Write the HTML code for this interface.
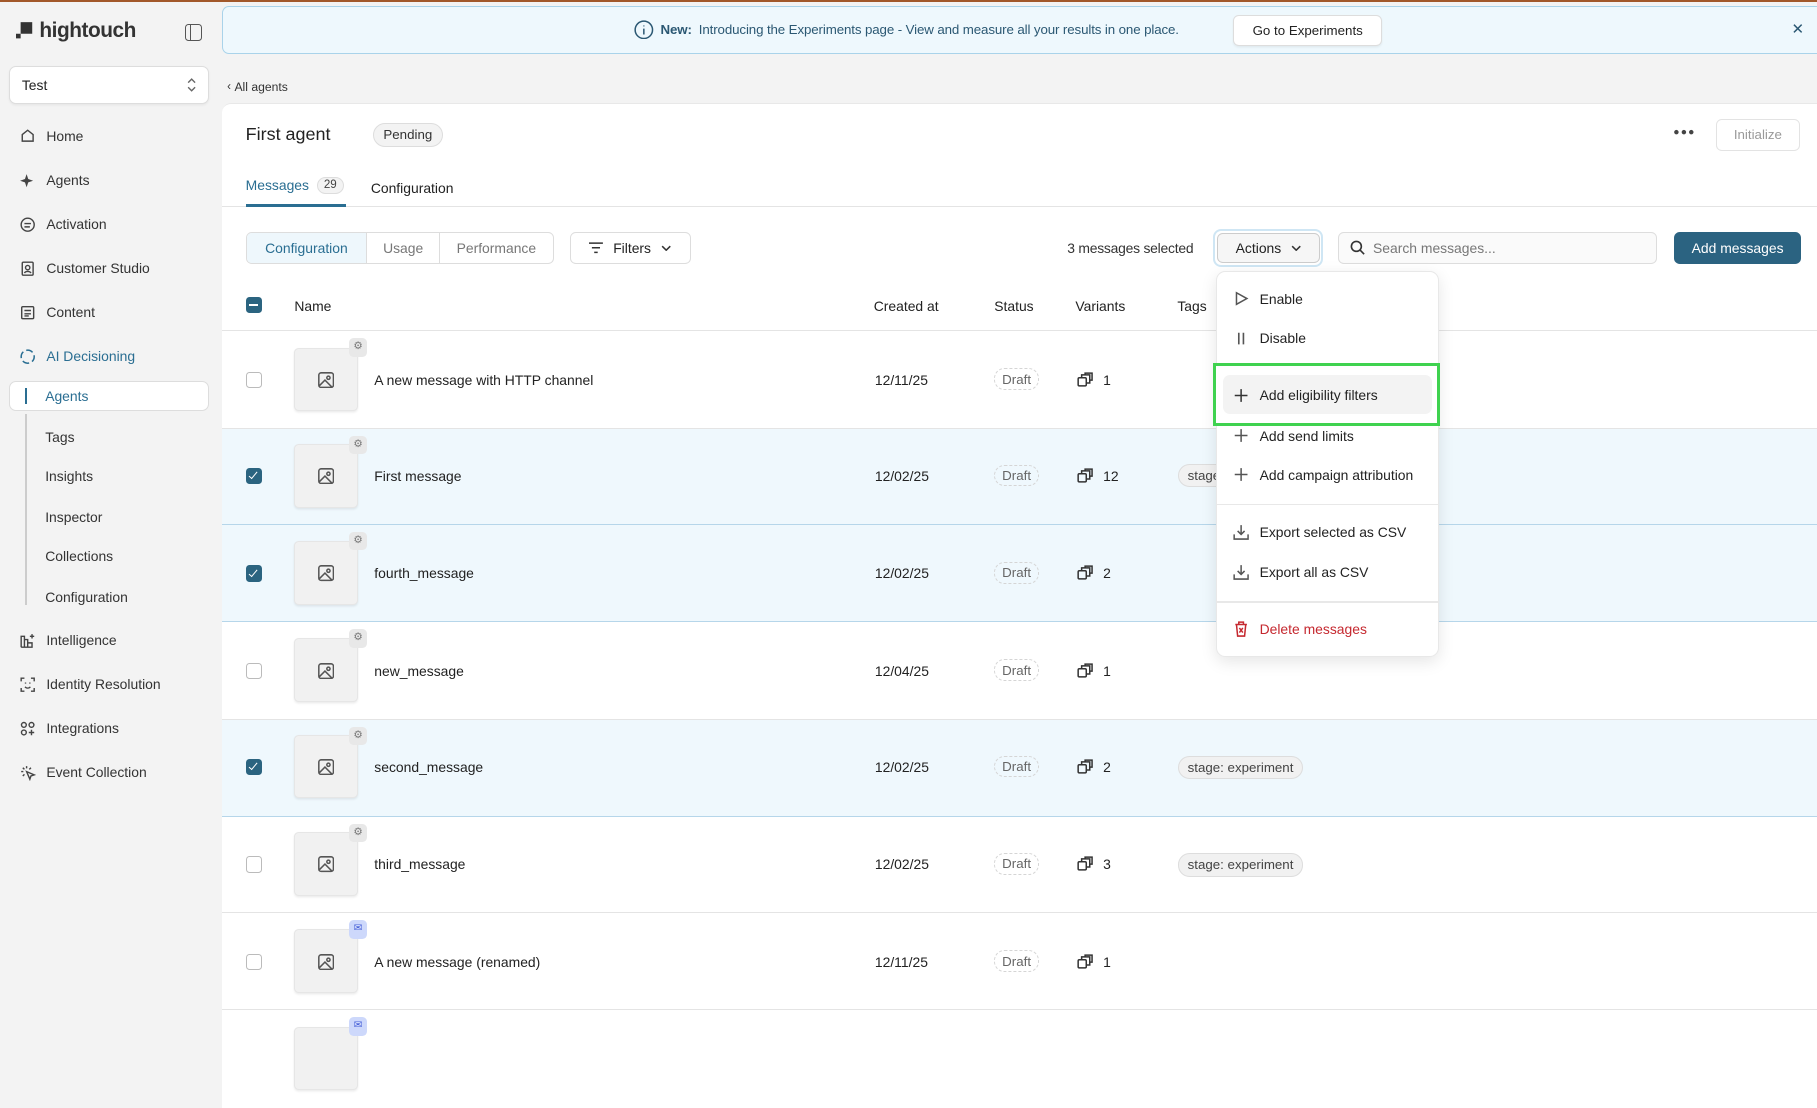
<!DOCTYPE html>
<html><head><meta charset="utf-8">
<style>
html{zoom:1.1588}
*{box-sizing:border-box;margin:0;padding:0}
body{width:1568px;height:905px;overflow:hidden;background:#f3f3f3;font-family:"Liberation Sans",sans-serif;color:#222;font-size:12px;position:relative}
.a{position:absolute}
.c{display:flex;align-items:center}
.nav{position:absolute;left:16px;display:flex;align-items:center;gap:9px;color:#333;font-size:12px}
.nav svg{width:15px;height:15px}
.sub{position:absolute;left:39px;color:#333;font-size:12px}
.row{position:absolute;left:192px;width:1376px;height:84px;border-bottom:1px solid #e4e4e4;background:#fff}
.row.sel{background:#eff8fd;border-bottom:1px solid #b6d6ea}
.cb{position:absolute;left:20px;width:14px;height:14px;border:1px solid #bbb;border-radius:3px;background:#fff}
.cb.on{background:#2b6480;border-color:#2b6480}
.cb.on::after{content:"";position:absolute;left:4px;top:1px;width:3px;height:7px;border:solid #fff;border-width:0 1.6px 1.6px 0;transform:rotate(40deg)}
.th{position:absolute;left:62px;width:55px;height:55px;background:#f1f1f1;border:1px solid #e6e6e6;border-radius:4px;box-shadow:0 1px 2px rgba(0,0,0,.08)}
.bd{position:absolute;left:109px;width:16px;height:16px;background:#e8e8e8;border-radius:4px;font-size:9px;color:#777;text-align:center;line-height:16px}
.bd.m{background:#cdd8fb;color:#4a63d8}
.pill{position:absolute;border:1px dashed #d5d5d5;border-radius:9px;padding:2px 6px;color:#666;font-size:11.5px}
.tag{position:absolute;left:825px;background:#f1f1f1;border:1px solid #ddd;border-radius:10px;padding:3px 7px;font-size:11.5px;color:#444}
.mi{position:absolute;left:1064px;display:flex;align-items:center;gap:9px;font-size:12px;color:#222}
.ic{position:absolute;left:274px}
.vi{position:absolute}
</style></head><body>
<div class="a" style="left:0;top:0;width:1568px;height:2px;background:#a2582a"></div>
<div class="a c" style="left:14px;top:16px;gap:4px"><svg width="16" height="16"><rect x="4" y="1" width="10" height="10" fill="#333"/><rect x="0" y="11" width="4" height="4" fill="#333"/></svg><span style="font-size:18px;font-weight:bold;color:#333;letter-spacing:-.4px">hightouch</span></div>
<div class="a" style="left:160px;top:21px;width:14px;height:14px;border:1.5px solid #555;border-radius:3px"><div style="position:absolute;left:3px;top:0;bottom:0;border-left:1.5px solid #555"></div></div>
<div class="a c" style="left:8px;top:57px;width:172px;height:33px;background:#fff;border:1px solid #ddd;border-radius:6px;padding:0 10px;justify-content:space-between;box-shadow:0 1px 2px rgba(0,0,0,.05)"><span>Test</span><svg width="8" height="12" fill="none" stroke="#666" stroke-width="1.2"><path d="M1 4l3-3 3 3M1 8l3 3 3-3"/></svg></div>
<div class="nav" style="top:110px"><svg viewBox="0 0 16 16" fill="none" stroke="#444" stroke-width="1.3"><path d="M3 7l5-4 5 4v6H3z"/></svg>Home</div>
<div class="nav" style="top:148px"><svg viewBox="0 0 16 16" fill="#444"><path d="M7 2l1.5 4.5L13 8l-4.5 1.5L7 14 5.5 9.5 1 8l4.5-1.5z"/></svg>Agents</div>
<div class="nav" style="top:186px"><svg viewBox="0 0 16 16" fill="none" stroke="#444" stroke-width="1.3"><circle cx="8" cy="8" r="6"/><path d="M5 7h6M5 10h5"/></svg>Activation</div>
<div class="nav" style="top:224px"><svg viewBox="0 0 16 16" fill="none" stroke="#444" stroke-width="1.3"><rect x="3" y="2" width="10" height="12" rx="1"/><circle cx="8" cy="7" r="2"/><path d="M5 12c1-2 5-2 6 0"/></svg>Customer Studio</div>
<div class="nav" style="top:262px"><svg viewBox="0 0 16 16" fill="none" stroke="#444" stroke-width="1.3"><rect x="2.5" y="2.5" width="11" height="11" rx="1"/><path d="M5 6h6M5 9h6M5 11h4"/></svg>Content</div>
<div class="nav" style="top:300px;color:#2a6e92"><svg viewBox="0 0 16 16" fill="none" stroke="#2a6e92" stroke-width="1.4"><path d="M8 2a6 6 0 0 1 6 6M14 8a6 6 0 0 1-6 6M8 14a6 6 0 0 1-6-6M2 8a6 6 0 0 1 6-6" stroke-dasharray="5 3"/></svg>AI Decisioning</div>
<div class="a" style="left:8px;top:329px;width:172px;height:26px;background:#fff;border:1px solid #ddd;border-radius:6px"></div>
<div class="a" style="left:22px;top:335px;width:1.5px;height:14px;background:#2a6e92"></div>
<div class="sub" style="top:335px;color:#2a6e92">Agents</div>
<div class="a" style="left:22px;top:357px;width:1px;height:165px;background:#ccc"></div>
<div class="sub" style="top:370px">Tags</div>
<div class="sub" style="top:404px">Insights</div>
<div class="sub" style="top:439px">Inspector</div>
<div class="sub" style="top:473px">Collections</div>
<div class="sub" style="top:508px">Configuration</div>
<div class="nav" style="top:545px"><svg viewBox="0 0 16 16" fill="none" stroke="#444" stroke-width="1.3"><path d="M2 14V4h3v10M5 14V7h3v7M8 14V10h4v4H2"/><path d="M12 2v4M10 4h4"/></svg>Intelligence</div>
<div class="nav" style="top:583px"><svg viewBox="0 0 16 16" fill="none" stroke="#444" stroke-width="1.3"><path d="M2 5V2h3M11 2h3v3M14 11v3h-3M5 14H2v-3M5.5 10c1.5 1.5 3.5 1.5 5 0M6 6v1M10 6v1"/></svg>Identity Resolution</div>
<div class="nav" style="top:621px"><svg viewBox="0 0 16 16" fill="none" stroke="#444" stroke-width="1.3"><circle cx="4.5" cy="4.5" r="2.2"/><circle cx="11.5" cy="4.5" r="2.2"/><circle cx="4.5" cy="11.5" r="2.2"/><path d="M11.5 9v5M9 11.5h5"/></svg>Integrations</div>
<div class="nav" style="top:659px"><svg viewBox="0 0 16 16" fill="none" stroke="#444" stroke-width="1.3"><path d="M7 7l7 3-3 1-1 3z"/><path d="M2 7h2M7 2v2M3.5 3.5l1.5 1.5M3.5 11l1.5-1.5M11 3.5l-1.5 1.5"/></svg>Event Collection</div>

<div class="a" style="left:192px;top:5px;width:1376px;height:42px;background:#eef8fd;border:1px solid #a9d3ea;border-right:none;border-radius:6px 0 0 6px"></div>
<div class="a c" style="left:547px;top:17px;gap:6px;color:#2b5873;font-size:11.5px;letter-spacing:-.1px"><svg width="17" height="17" viewBox="0 0 17 17" fill="none" stroke="#2b5873" stroke-width="1.3"><circle cx="8.5" cy="8.5" r="7.5"/><path d="M8.5 7.5v5M8.5 4.7v.8"/></svg><b>New:</b><span>Introducing the Experiments page - View and measure all your results in one place.</span></div>
<div class="a c" style="left:1064px;top:13px;width:129px;height:27px;background:#fff;border:1px solid #ddd;border-radius:5px;justify-content:center;font-size:11.5px;color:#222;box-shadow:0 1px 2px rgba(0,0,0,.06)">Go to Experiments</div>
<div class="a" style="left:1546px;top:17px;font-size:13px;color:#2b5873">✕</div>

<div class="a c" style="left:196px;top:69px;font-size:10.5px;color:#333;gap:3px"><span style="font-size:10px">‹</span>All agents</div>

<div class="a" style="left:192px;top:89px;width:1376px;height:816px;background:#fff;border-top-left-radius:8px;border-top:1px solid #e8e8e8"></div>
<div class="a" style="left:212px;top:107px;font-size:15.5px;color:#222">First agent</div>
<div class="a" style="left:322px;top:106px;height:21px;padding:0 8px;border:1px solid #ddd;border-radius:11px;background:#f3f3f3;font-size:11.5px;line-height:19px;color:#333">Pending</div>
<div class="a" style="left:1444px;top:110px;font-size:9px;color:#444;letter-spacing:1px">●●●</div>
<div class="a c" style="left:1481px;top:103px;width:72px;height:27px;border:1px solid #e3e3e3;border-radius:5px;justify-content:center;color:#999;font-size:11.5px">Initialize</div>

<div class="a c" style="left:212px;top:153px;gap:7px"><span style="color:#2a6e92;font-size:12px">Messages</span><span style="border:1px solid #ddd;background:#f3f3f3;border-radius:9px;padding:1px 5px;font-size:10px;color:#444">29</span></div>
<div class="a" style="left:320px;top:155px;font-size:12px;color:#222">Configuration</div>
<div class="a" style="left:192px;top:178px;width:1376px;height:1px;background:#e4e4e4"></div>
<div class="a" style="left:212px;top:176px;width:87px;height:2.5px;background:#2a6e92"></div>

<div class="a c" style="left:212px;top:200px;height:28px;border:1px solid #ddd;border-radius:5px;overflow:hidden;font-size:12px">
<div class="c" style="height:100%;width:104px;background:#eef7fc;color:#2a6e92;justify-content:center;border-right:1px solid #ddd">Configuration</div>
<div class="c" style="height:100%;width:63px;color:#777;justify-content:center;border-right:1px solid #ddd">Usage</div>
<div class="c" style="height:100%;width:97px;color:#777;justify-content:center">Performance</div></div>
<div class="a c" style="left:492px;top:200px;width:104px;height:28px;border:1px solid #ddd;border-radius:5px;justify-content:center;gap:9px;font-size:12px"><svg width="12" height="10" fill="none" stroke="#333" stroke-width="1.3"><path d="M0 1h12M2.5 5h7M4.5 9h3"/></svg>Filters<svg width="9" height="6"><path d="M1 1l3.5 3.5L8 1" fill="none" stroke="#333" stroke-width="1.3"/></svg></div>

<div class="a" style="left:921px;top:207px;font-size:12px;color:#333;letter-spacing:-.2px">3 messages selected</div>
<div class="a" style="left:1047px;top:198px;width:95px;height:32px;border:2px solid #cfe6f4;border-radius:7px"></div>
<div class="a c" style="left:1050px;top:201px;width:89px;height:26px;background:#f6f6f6;border:1px solid #ccc;border-radius:5px;justify-content:center;gap:8px;font-size:12px">Actions<svg width="9" height="6"><path d="M1 1l3.5 3.5L8 1" fill="none" stroke="#333" stroke-width="1.3"/></svg></div>
<div class="a c" style="left:1155px;top:200px;width:275px;height:28px;border:1px solid #ddd;border-radius:5px;background:#fafafa;padding-left:9px;gap:7px;color:#777;font-size:12px"><svg width="13" height="13" fill="none" stroke="#333" stroke-width="1.4"><circle cx="5.5" cy="5.5" r="4.3"/><path d="M8.7 8.7l3.5 3.5"/></svg>Search messages...</div>
<div class="a c" style="left:1445px;top:200px;width:109px;height:28px;border-radius:5px;background:#2b6381;color:#fff;justify-content:center;font-size:12px">Add messages</div>

<div class="a" style="left:212px;top:256px;width:14px;height:14px;border-radius:3px;background:#2b6480"><div style="position:absolute;left:3px;top:6px;width:8px;height:2px;background:#fff"></div></div>
<div class="a" style="left:254px;top:257px">Name</div>
<div class="a" style="left:754px;top:257px">Created at</div>
<div class="a" style="left:858px;top:257px">Status</div>
<div class="a" style="left:928px;top:257px">Variants</div>
<div class="a" style="left:1016px;top:257px">Tags</div>
<div class="a" style="left:192px;top:285px;width:1376px;height:1px;background:#e4e4e4"></div>

<div class="row" style="top:286px"><div class="cb" style="top:35px"></div><div class="th" style="top:14px"></div><div class="bd" style="top:6px">⚙</div><div class="a" style="left:131px;top:35px">A new message with HTTP channel</div><div class="a" style="left:563px;top:35px">12/11/25</div><div class="pill" style="left:666px;top:32px">Draft</div><div class="a" style="left:760px;top:35px">1</div></div>
<div class="row sel" style="top:370px;height:83px"><div class="cb on" style="top:34px"></div><div class="th" style="top:13px"></div><div class="bd" style="top:6px">⚙</div><div class="a" style="left:131px;top:34px">First message</div><div class="a" style="left:563px;top:34px">12/02/25</div><div class="pill" style="left:666px;top:31px">Draft</div><div class="a" style="left:760px;top:34px">12</div><div class="tag" style="top:30px">stage: experiment</div></div>
<div class="row sel" style="top:453px"><div class="cb on" style="top:35px"></div><div class="th" style="top:14px"></div><div class="bd" style="top:6px">⚙</div><div class="a" style="left:131px;top:35px">fourth_message</div><div class="a" style="left:563px;top:35px">12/02/25</div><div class="pill" style="left:666px;top:32px">Draft</div><div class="a" style="left:760px;top:35px">2</div></div>
<div class="row" style="top:537px"><div class="cb" style="top:35px"></div><div class="th" style="top:14px"></div><div class="bd" style="top:6px">⚙</div><div class="a" style="left:131px;top:35px">new_message</div><div class="a" style="left:563px;top:35px">12/04/25</div><div class="pill" style="left:666px;top:32px">Draft</div><div class="a" style="left:760px;top:35px">1</div></div>
<div class="row sel" style="top:621px"><div class="cb on" style="top:34px"></div><div class="th" style="top:13px"></div><div class="bd" style="top:6px">⚙</div><div class="a" style="left:131px;top:34px">second_message</div><div class="a" style="left:563px;top:34px">12/02/25</div><div class="pill" style="left:666px;top:31px">Draft</div><div class="a" style="left:760px;top:34px">2</div><div class="tag" style="top:31px">stage: experiment</div></div>
<div class="row" style="top:705px;height:83px"><div class="cb" style="top:34px"></div><div class="th" style="top:13px"></div><div class="bd" style="top:6px">⚙</div><div class="a" style="left:131px;top:34px">third_message</div><div class="a" style="left:563px;top:34px">12/02/25</div><div class="pill" style="left:666px;top:31px">Draft</div><div class="a" style="left:760px;top:34px">3</div><div class="tag" style="top:31px">stage: experiment</div></div>
<div class="row" style="top:788px"><div class="cb" style="top:35px"></div><div class="th" style="top:14px"></div><div class="bd m" style="top:6px">✉</div><div class="a" style="left:131px;top:35px">A new message (renamed)</div><div class="a" style="left:563px;top:35px">12/11/25</div><div class="pill" style="left:666px;top:32px">Draft</div><div class="a" style="left:760px;top:35px">1</div></div>
<div class="a" style="left:192px;top:871px;width:1376px;height:1px;background:#e4e4e4"></div>
<div class="row" style="top:872px;border:none"><div class="th" style="top:14px"></div><div class="bd m" style="top:6px">✉</div></div>

<svg class="ic" style="top:321px" width="14" height="14" fill="none" stroke="#555" stroke-width="1.3"><rect x=".7" y=".7" width="12.6" height="12.6" rx="2"/><circle cx="9" cy="5" r="1.4"/><path d="M1 12l5-5 6 6"/></svg>
<svg class="ic" style="top:404px" width="14" height="14" fill="none" stroke="#555" stroke-width="1.3"><rect x=".7" y=".7" width="12.6" height="12.6" rx="2"/><circle cx="9" cy="5" r="1.4"/><path d="M1 12l5-5 6 6"/></svg>
<svg class="ic" style="top:488px" width="14" height="14" fill="none" stroke="#555" stroke-width="1.3"><rect x=".7" y=".7" width="12.6" height="12.6" rx="2"/><circle cx="9" cy="5" r="1.4"/><path d="M1 12l5-5 6 6"/></svg>
<svg class="ic" style="top:572px" width="14" height="14" fill="none" stroke="#555" stroke-width="1.3"><rect x=".7" y=".7" width="12.6" height="12.6" rx="2"/><circle cx="9" cy="5" r="1.4"/><path d="M1 12l5-5 6 6"/></svg>
<svg class="ic" style="top:655px" width="14" height="14" fill="none" stroke="#555" stroke-width="1.3"><rect x=".7" y=".7" width="12.6" height="12.6" rx="2"/><circle cx="9" cy="5" r="1.4"/><path d="M1 12l5-5 6 6"/></svg>
<svg class="ic" style="top:739px" width="14" height="14" fill="none" stroke="#555" stroke-width="1.3"><rect x=".7" y=".7" width="12.6" height="12.6" rx="2"/><circle cx="9" cy="5" r="1.4"/><path d="M1 12l5-5 6 6"/></svg>
<svg class="ic" style="top:823px" width="14" height="14" fill="none" stroke="#555" stroke-width="1.3"><rect x=".7" y=".7" width="12.6" height="12.6" rx="2"/><circle cx="9" cy="5" r="1.4"/><path d="M1 12l5-5 6 6"/></svg>

<svg class="vi" style="left:929px;top:321px" width="14" height="13" fill="none" stroke="#333" stroke-width="1.3"><rect x="1" y="5" width="7" height="7" rx="1"/><path d="M4 5V2.5h7v7H8M7 2.5V1h6v6h-2"/></svg>
<svg class="vi" style="left:929px;top:404px" width="14" height="13" fill="none" stroke="#333" stroke-width="1.3"><rect x="1" y="5" width="7" height="7" rx="1"/><path d="M4 5V2.5h7v7H8M7 2.5V1h6v6h-2"/></svg>
<svg class="vi" style="left:929px;top:488px" width="14" height="13" fill="none" stroke="#333" stroke-width="1.3"><rect x="1" y="5" width="7" height="7" rx="1"/><path d="M4 5V2.5h7v7H8M7 2.5V1h6v6h-2"/></svg>
<svg class="vi" style="left:929px;top:572px" width="14" height="13" fill="none" stroke="#333" stroke-width="1.3"><rect x="1" y="5" width="7" height="7" rx="1"/><path d="M4 5V2.5h7v7H8M7 2.5V1h6v6h-2"/></svg>
<svg class="vi" style="left:929px;top:655px" width="14" height="13" fill="none" stroke="#333" stroke-width="1.3"><rect x="1" y="5" width="7" height="7" rx="1"/><path d="M4 5V2.5h7v7H8M7 2.5V1h6v6h-2"/></svg>
<svg class="vi" style="left:929px;top:739px" width="14" height="13" fill="none" stroke="#333" stroke-width="1.3"><rect x="1" y="5" width="7" height="7" rx="1"/><path d="M4 5V2.5h7v7H8M7 2.5V1h6v6h-2"/></svg>
<svg class="vi" style="left:929px;top:823px" width="14" height="13" fill="none" stroke="#333" stroke-width="1.3"><rect x="1" y="5" width="7" height="7" rx="1"/><path d="M4 5V2.5h7v7H8M7 2.5V1h6v6h-2"/></svg>

<div class="a" style="left:1049px;top:234px;width:193px;height:333px;background:#fff;border:1px solid #e8e8e8;border-radius:8px;box-shadow:0 4px 14px rgba(0,0,0,.1)"></div>
<div class="a" style="left:1049px;top:435px;width:193px;height:1px;background:#e8e8e8"></div>
<div class="a" style="left:1049px;top:519px;width:193px;height:1px;background:#e8e8e8"></div>
<div class="a" style="left:1047px;top:313px;width:196px;height:55px;border:3px solid #3fd24f;background:#fff"></div>
<div class="a" style="left:1055px;top:324px;width:181px;height:33px;background:#f3f3f3;border-radius:6px"></div>
<div class="mi" style="top:251px"><svg width="14" height="13" fill="none" stroke="#555" stroke-width="1.3"><path d="M3 1.5l9 5-9 5z"/></svg>Enable</div>
<div class="mi" style="top:285px"><svg width="14" height="13" fill="none" stroke="#555" stroke-width="1.4"><path d="M5 1.5v10M9 1.5v10"/></svg>Disable</div>
<div class="mi" style="top:334px"><svg width="14" height="13" fill="none" stroke="#333" stroke-width="1.3"><path d="M7 1v11M1.5 6.5h11"/></svg>Add eligibility filters</div>
<div class="mi" style="top:369px"><svg width="14" height="13" fill="none" stroke="#555" stroke-width="1.3"><path d="M7 1v11M1.5 6.5h11"/></svg>Add send limits</div>
<div class="mi" style="top:403px"><svg width="14" height="13" fill="none" stroke="#555" stroke-width="1.3"><path d="M7 1v11M1.5 6.5h11"/></svg>Add campaign attribution</div>
<div class="mi" style="top:452px"><svg width="14" height="14" fill="none" stroke="#555" stroke-width="1.3"><path d="M7 1v8M4 6l3 3 3-3M1 9v4h12V9"/></svg>Export selected as CSV</div>
<div class="mi" style="top:487px"><svg width="14" height="14" fill="none" stroke="#555" stroke-width="1.3"><path d="M7 1v8M4 6l3 3 3-3M1 9v4h12V9"/></svg>Export all as CSV</div>
<div class="mi" style="top:536px;color:#c5282f"><svg width="14" height="14" fill="none" stroke="#c5282f" stroke-width="1.3"><path d="M2 3h10M5 3V1h4v2M3 3l1 10h6l1-10M5.5 6l3 4M8.5 6l-3 4"/></svg>Delete messages</div>
</body></html>
